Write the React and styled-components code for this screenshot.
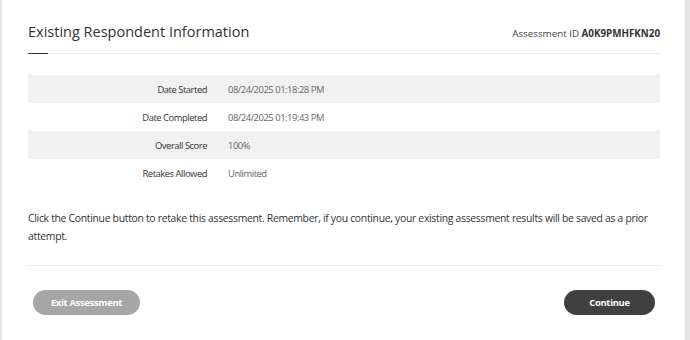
import styled, { createGlobalStyle } from "styled-components";

const GlobalStyle = createGlobalStyle`
  body {
    margin: 0;
    background: #fff;
    font-family: "Open Sans", "Noto Sans", sans-serif;
    color: #333;
  }
`;

const Frame = styled.div`
  min-height: 340px;
  box-sizing: border-box;
  border-left: 2px solid #e4e4e4;
  border-right: 5px solid #e4e4e4;
  padding: 0 25px 0 26px;
`;

const Header = styled.div`
  position: relative;
  display: flex;
  justify-content: space-between;
  align-items: baseline;
  padding: 22px 0 11px;
  border-bottom: 1px solid #eeeeee;

  &::after {
    content: "";
    position: absolute;
    left: 0;
    bottom: -1px;
    width: 20px;
    height: 1px;
    background: #333;
  }
`;

const Title = styled.h1`
  margin: 0;
  font-size: 14.5px;
  font-weight: 500;
  line-height: 20px;
  color: #333;
`;

const AssessmentId = styled.div`
  font-size: 9.8px;
  color: #444;

  b {
    font-weight: 700;
    color: #333;
  }
`;

const Details = styled.div`
  margin-top: 21px;
`;

const Row = styled.div`
  display: grid;
  grid-template-columns: 179px 1fr;
  column-gap: 21px;
  align-items: center;
  height: 28px;
  font-size: 9.4px;
  letter-spacing: -0.45px;
  background: ${(p) => (p.$shaded ? "#f1f1f1" : "transparent")};
`;

const Label = styled.span`
  text-align: right;
  color: #333;
`;

const Value = styled.span`
  color: #666;
`;

const Message = styled.p`
  margin: 22px 0 0;
  font-size: 10.4px;
  letter-spacing: -0.3px;
  line-height: 18px;
  color: #333;
  padding-bottom: 20px;
  border-bottom: 1px solid #eeeeee;
`;

const Actions = styled.div`
  display: flex;
  justify-content: space-between;
  padding: 24px 5px 0;
`;

const Button = styled.button`
  height: 25px;
  border: none;
  border-radius: 13px;
  font-family: inherit;
  font-size: 9.4px;
  letter-spacing: -0.3px;
  font-weight: 700;
  color: #fff;
  cursor: pointer;
  width: ${(p) => p.$width}px;
  background: ${(p) => (p.$primary ? "#404040" : "#a6a6a6")};
`;

const rows = [
  ["Date Started", "08/24/2025 01:18:28 PM"],
  ["Date Completed", "08/24/2025 01:19:43 PM"],
  ["Overall Score", "100%"],
  ["Retakes Allowed", "Unlimited"],
];

const App = () => {
  return (
    <>
      <GlobalStyle />
      <Frame>
        <Header>
          <Title>Existing Respondent Information</Title>
          <AssessmentId>
            Assessment ID <b>A0K9PMHFKN20</b>
          </AssessmentId>
        </Header>
        <Details>
          {rows.map(([label, value], i) => (
            <Row key={label} $shaded={i % 2 === 0}>
              <Label>{label}</Label>
              <Value>{value}</Value>
            </Row>
          ))}
        </Details>
        <Message>
          Click the Continue button to retake this assessment. Remember, if you
          continue, your existing assessment results will be saved as a prior
          attempt.
        </Message>
        <Actions>
          <Button $width={107}>Exit Assessment</Button>
          <Button $width={91} $primary>
            Continue
          </Button>
        </Actions>
      </Frame>
    </>
  );
};

export default App;
